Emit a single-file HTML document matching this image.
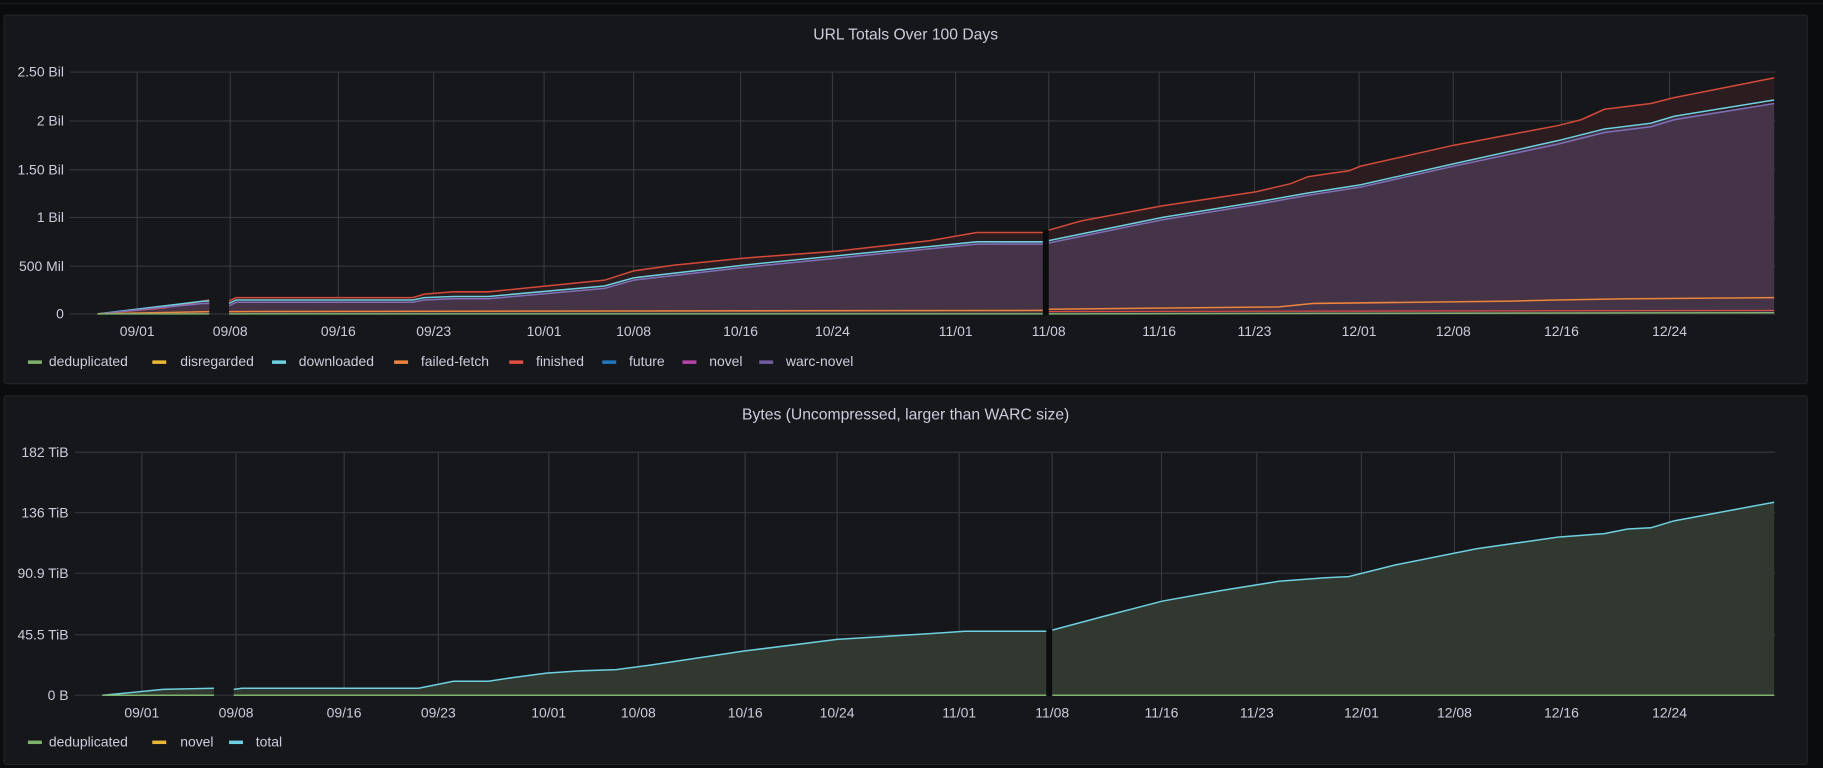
<!DOCTYPE html>
<html><head><meta charset="utf-8"><style>
html,body{margin:0;padding:0;background:#0b0c0e;width:1823px;height:768px;overflow:hidden}
svg{display:block}
text{font-family:"Liberation Sans",sans-serif;fill:#ccccdc}
</style></head><body>
<svg width="1823" height="768" viewBox="0 0 1568 660.6" preserveAspectRatio="none">
<rect width="1568" height="661" fill="#0b0c0e"/>
<line x1="0" y1="3" x2="1568" y2="3" stroke="#1a1b1f" stroke-width="1"/>
<!-- Panel 1 -->
<rect x="3.5" y="13" width="1551" height="317" rx="2" fill="#16171b" stroke="#222428"/>
<text x="779" y="34" font-size="13.5" text-anchor="middle">URL Totals Over 100 Days</text>
<g stroke="#35373b" stroke-width="1">
<line x1="60" y1="62" x2="1527" y2="62"/><line x1="60" y1="104" x2="1527" y2="104"/><line x1="60" y1="146" x2="1527" y2="146"/><line x1="60" y1="187" x2="1527" y2="187"/><line x1="60" y1="229" x2="1527" y2="229"/><line x1="60" y1="270" x2="1527" y2="270"/>
<line x1="118" y1="62" x2="118" y2="270"/><line x1="198" y1="62" x2="198" y2="270"/><line x1="291" y1="62" x2="291" y2="270"/><line x1="373" y1="62" x2="373" y2="270"/><line x1="468" y1="62" x2="468" y2="270"/><line x1="545" y1="62" x2="545" y2="270"/><line x1="637" y1="62" x2="637" y2="270"/><line x1="716" y1="62" x2="716" y2="270"/><line x1="822" y1="62" x2="822" y2="270"/><line x1="902" y1="62" x2="902" y2="270"/><line x1="997" y1="62" x2="997" y2="270"/><line x1="1079" y1="62" x2="1079" y2="270"/><line x1="1169" y1="62" x2="1169" y2="270"/><line x1="1250" y1="62" x2="1250" y2="270"/><line x1="1343" y1="62" x2="1343" y2="270"/><line x1="1436" y1="62" x2="1436" y2="270"/>
</g>
<g font-size="12" text-anchor="end">
<text x="55" y="66">2.50 Bil</text><text x="55" y="108">2 Bil</text><text x="55" y="150">1.50 Bil</text><text x="55" y="191">1 Bil</text><text x="55" y="233">500 Mil</text><text x="55" y="274">0</text>
</g>
<g font-size="12" text-anchor="middle">
<text x="118" y="289">09/01</text><text x="198" y="289">09/08</text><text x="291" y="289">09/16</text><text x="373" y="289">09/23</text><text x="468" y="289">10/01</text><text x="545" y="289">10/08</text><text x="637" y="289">10/16</text><text x="716" y="289">10/24</text><text x="822" y="289">11/01</text><text x="902" y="289">11/08</text><text x="997" y="289">11/16</text><text x="1079" y="289">11/23</text><text x="1169" y="289">12/01</text><text x="1250" y="289">12/08</text><text x="1343" y="289">12/16</text><text x="1436" y="289">12/24</text>
</g>
<path d="M84,270 L140,265 L180,258 L180,270Z M197,270 L197,259 L203,256 L355,256 L365,253 L390,251 L420,251 L460,247 L520,241 L545,233 L580,228 L640,222 L720,216 L800,207 L840,200 L897,200 L897,270Z M902,270 L902,198 L930,190 L1000,177 L1080,165 L1110,158 L1125,152 L1145,149 L1160,147 L1170,143 L1250,125 L1340,108 L1360,103 L1380,94 L1420,89 L1440,84 L1526,67 L1526,270Z" fill="#2a1c1f"/>
<path d="M84,270 L175,260 L180,260 L180,270Z M197,270 L197,262 L203,259 L355,259 L365,257 L390,256 L420,256 L520,247 L545,240 L640,229 L720,221 L800,213 L840,209 L897,208 L897,270Z M902,270 L902,208 L1000,188 L1080,175 L1125,167 L1170,160 L1250,142 L1340,122 L1380,112 L1420,107 L1440,101 L1526,89 L1526,270Z" fill="#453447"/>
<g fill="none" stroke-width="1.3">
<path d="M84,270 L140,265 L180,258 M197,259 L203,256 L355,256 L365,253 L390,251 L420,251 L460,247 L520,241 L545,233 L580,228 L640,222 L720,216 L800,207 L840,200 L897,200 M902,198 L930,190 L1000,177 L1080,165 L1110,158 L1125,152 L1145,149 L1160,147 L1170,143 L1250,125 L1340,108 L1360,103 L1380,94 L1420,89 L1440,84 L1526,67" stroke="#d44a3a"/>
<path d="M84,270 L175,259 L180,259 M197,261 L203,258 L355,258 L365,256 L390,255 L420,255 L520,246 L545,239 L640,228 L720,220 L800,212 L840,208 L897,208 M902,207 L1000,187 L1080,174 L1125,166 L1170,159 L1250,141 L1340,121 L1380,111 L1420,106 L1440,100 L1526,86" stroke="#6ed0e0"/>
<path d="M84,270 L175,261 L180,261 M197,263 L203,260 L355,260 L365,258 L390,257 L420,257 L520,248 L545,241 L640,230 L720,222 L800,214 L840,210 L897,210 M902,209 L1000,189 L1080,176 L1125,168 L1170,161 L1250,143 L1340,124 L1380,114 L1420,109 L1440,103 L1526,89" stroke="#806eb7"/>
<path d="M84,270 L180,268 M197,268 L897,267 M902,266 L1100,264 L1130,261 L1300,259 L1340,258 L1400,257 L1526,256" stroke="#ef843c"/>
<path d="M84,270 L180,270 M197,270 L897,270 M902,270 L1526,269" stroke="#7eb26d"/>
<path d="M902,268 L1526,267" stroke="#e24d42" stroke-width="1"/>
</g>
<rect x="897" y="198" width="5" height="73" fill="#0b0c0e"/>
<g font-size="12">
<rect x="24" y="310" width="12" height="3" fill="#7eb26d"/><text x="42" y="315">deduplicated</text>
<rect x="131" y="310" width="12" height="3" fill="#eab839"/><text x="155" y="315">disregarded</text>
<rect x="234" y="310" width="12" height="3" fill="#6ed0e0"/><text x="257" y="315">downloaded</text>
<rect x="339" y="310" width="12" height="3" fill="#ef843c"/><text x="362" y="315">failed-fetch</text>
<rect x="438" y="310" width="12" height="3" fill="#e24d42"/><text x="461" y="315">finished</text>
<rect x="518" y="310" width="12" height="3" fill="#1f78c1"/><text x="541" y="315">future</text>
<rect x="587" y="310" width="12" height="3" fill="#ba43a9"/><text x="610" y="315">novel</text>
<rect x="653" y="310" width="12" height="3" fill="#705da0"/><text x="676" y="315">warc-novel</text>
</g>
<!-- Panel 2 -->
<rect x="3.5" y="340.5" width="1551" height="317" rx="2" fill="#16171b" stroke="#222428"/>
<text x="779" y="361" font-size="13.5" text-anchor="middle">Bytes (Uncompressed, larger than WARC size)</text>
<g stroke="#35373b" stroke-width="1">
<line x1="64.5" y1="389" x2="1527" y2="389"/><line x1="64.5" y1="441" x2="1527" y2="441"/><line x1="64.5" y1="493" x2="1527" y2="493"/><line x1="64.5" y1="546" x2="1527" y2="546"/><line x1="64.5" y1="598" x2="1527" y2="598"/>
<line x1="122" y1="389" x2="122" y2="598"/><line x1="203" y1="389" x2="203" y2="598"/><line x1="296" y1="389" x2="296" y2="598"/><line x1="377" y1="389" x2="377" y2="598"/><line x1="472" y1="389" x2="472" y2="598"/><line x1="549" y1="389" x2="549" y2="598"/><line x1="641" y1="389" x2="641" y2="598"/><line x1="720" y1="389" x2="720" y2="598"/><line x1="825" y1="389" x2="825" y2="598"/><line x1="905" y1="389" x2="905" y2="598"/><line x1="999" y1="389" x2="999" y2="598"/><line x1="1081" y1="389" x2="1081" y2="598"/><line x1="1171" y1="389" x2="1171" y2="598"/><line x1="1251" y1="389" x2="1251" y2="598"/><line x1="1343" y1="389" x2="1343" y2="598"/><line x1="1436" y1="389" x2="1436" y2="598"/>
</g>
<g font-size="12" text-anchor="end">
<text x="59" y="393">182 TiB</text><text x="59" y="445">136 TiB</text><text x="59" y="497">90.9 TiB</text><text x="59" y="550">45.5 TiB</text><text x="59" y="602">0 B</text>
</g>
<g font-size="12" text-anchor="middle">
<text x="122" y="617">09/01</text><text x="203" y="617">09/08</text><text x="296" y="617">09/16</text><text x="377" y="617">09/23</text><text x="472" y="617">10/01</text><text x="549" y="617">10/08</text><text x="641" y="617">10/16</text><text x="720" y="617">10/24</text><text x="825" y="617">11/01</text><text x="905" y="617">11/08</text><text x="999" y="617">11/16</text><text x="1081" y="617">11/23</text><text x="1171" y="617">12/01</text><text x="1251" y="617">12/08</text><text x="1343" y="617">12/16</text><text x="1436" y="617">12/24</text>
</g>
<path d="M88,598 L110,596 L140,593 L184,592 L184,598Z M201,598 L201,593 L208,592 L360,592 L375,589 L390,586 L420,586 L440,583 L470,579 L500,577 L530,576 L560,572 L640,560 L720,550 L800,545 L830,543 L900,543 L900,598Z M905,598 L905,542 L950,530 L1000,517 L1050,508 L1100,500 L1140,497 L1160,496 L1200,486 L1270,472 L1340,462 L1380,459 L1400,455 L1420,454 L1440,448 L1526,432 L1526,598Z" fill="#313830"/>
<g fill="none" stroke-width="1.3">
<path d="M88,598 L110,596 L140,593 L184,592 M201,593 L208,592 L360,592 L375,589 L390,586 L420,586 L440,583 L470,579 L500,577 L530,576 L560,572 L640,560 L720,550 L800,545 L830,543 L900,543 M905,542 L950,530 L1000,517 L1050,508 L1100,500 L1140,497 L1160,496 L1200,486 L1270,472 L1340,462 L1380,459 L1400,455 L1420,454 L1440,448 L1526,432" stroke="#6ed0e0"/>
<path d="M88,598 L184,598 M201,598 L900,598 M905,598 L1526,598" stroke="#7eb26d"/>
</g>
<rect x="900" y="541" width="5" height="58" fill="#0b0c0e"/>
<g font-size="12">
<rect x="24" y="637" width="12" height="3" fill="#7eb26d"/><text x="42" y="642">deduplicated</text>
<rect x="131" y="637" width="12" height="3" fill="#eab839"/><text x="155" y="642">novel</text>
<rect x="197" y="637" width="12" height="3" fill="#6ed0e0"/><text x="220" y="642">total</text>
</g>
</svg>
</body></html>
